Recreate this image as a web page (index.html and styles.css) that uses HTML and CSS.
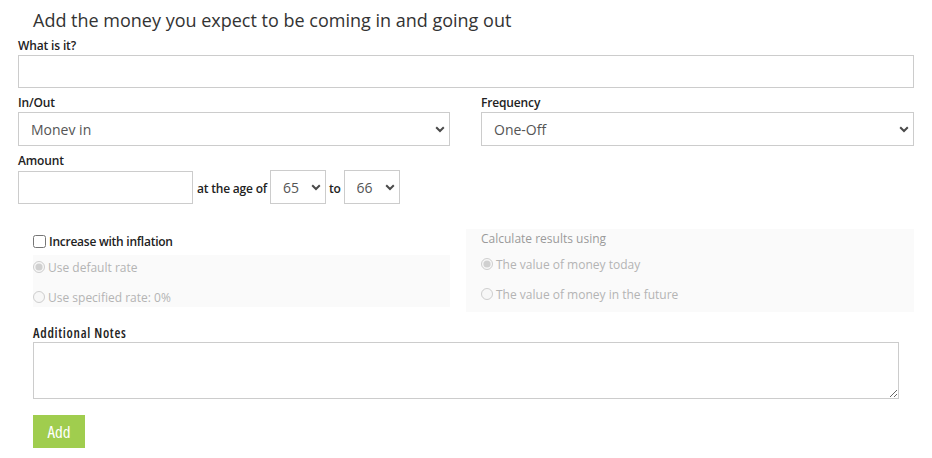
FILE: index.html
```html
<!DOCTYPE html>
<html>
<head>
<meta charset="utf-8">
<link rel="stylesheet" href="styles.css">
</head>
<body>
<div class="page">
  <h1 class="title">Add the money you expect to be coming in and going out</h1>
  <label class="lbl">What is it?</label>
  <input class="field" type="text">
  <div class="two">
    <div class="col">
      <label class="lbl">In/Out</label>
      <div class="selwrap">
        <select class="sel"><option>Monev in</option></select>
        <svg class="chev" width="10" height="7" viewBox="0 0 10 7"><path d="M1.2 1.3 L5 5 L8.8 1.3" fill="none" stroke="#4a4a4a" stroke-width="2"/></svg>
      </div>
    </div>
    <div class="col">
      <label class="lbl">Frequency</label>
      <div class="selwrap">
        <select class="sel"><option>One-Off</option></select>
        <svg class="chev" width="10" height="7" viewBox="0 0 10 7"><path d="M1.2 1.3 L5 5 L8.8 1.3" fill="none" stroke="#4a4a4a" stroke-width="2"/></svg>
      </div>
    </div>
  </div>
  <label class="lbl">Amount</label>
  <div class="amount">
    <input class="field amt" type="text">
    <span class="inl">at the age of</span>
    <div class="selwrap small">
      <select class="sel"><option>65</option></select>
      <svg class="chev" width="10" height="7" viewBox="0 0 10 7"><path d="M1.2 1.3 L5 5 L8.8 1.3" fill="none" stroke="#4a4a4a" stroke-width="2"/></svg>
    </div>
    <span class="inl">to</span>
    <div class="selwrap small">
      <select class="sel"><option>66</option></select>
      <svg class="chev" width="10" height="7" viewBox="0 0 10 7"><path d="M1.2 1.3 L5 5 L8.8 1.3" fill="none" stroke="#4a4a4a" stroke-width="2"/></svg>
    </div>
  </div>
  <div class="lower">
    <div class="infl">
      <label class="check"><input type="checkbox"> Increase with inflation</label>
      <div class="panel left">
        <label class="radio"><input type="radio" name="r1" checked disabled>Use default rate</label>
        <label class="radio"><input type="radio" name="r1" disabled>Use specified rate: 0%</label>
      </div>
    </div>
    <div class="panel right">
      <div class="ptitle">Calculate results using</div>
      <label class="radio"><input type="radio" name="r2" checked disabled>The value of money today</label>
      <label class="radio"><input type="radio" name="r2" disabled>The value of money in the future</label>
    </div>
  </div>
  <div class="notes">
    <label class="lbl cond">Additional Notes</label>
    <textarea class="ta"></textarea>
    <button class="btn">Add</button>
  </div>
</div>
</body>
</html>
```
FILE: styles.css
```css
html, body { margin: 0; padding: 0; background: #fff; }
body { font-family: "Open Sans", "Liberation Sans", sans-serif; color: #333; }
.page { padding: 7px 18px 0 18px; width: 896px; }
.title { margin: 0 0 4px 15px; font-size: 18px; line-height: 26px; font-weight: 400; color: #333; }
.lbl { display: block; font-size: 12px; line-height: 17px; font-weight: 600; color: #222; margin-bottom: 1px; letter-spacing: -0.15px; }
.field { display: block; box-sizing: border-box; width: 100%; height: 33px; border: 1px solid #ccc; border-radius: 0; padding: 0 12px; font-family: inherit; font-size: 14px; margin: 0 0 6px 0; background: #fff; }
.two { display: grid; grid-template-columns: 432px 433px; column-gap: 31px; }
.selwrap { position: relative; margin-bottom: 6px; }
.sel { display: block; box-sizing: border-box; width: 100%; height: 34px; border: 1px solid #ccc; border-radius: 0; padding: 1px 20px 0 12px; font-family: inherit; font-size: 14px; color: #555; background: #fff; -webkit-appearance: none; appearance: none; margin: 0; }
.chev { position: absolute; right: 5px; top: 14px; pointer-events: none; }
.amount { display: flex; align-items: center; gap: 3px; }
.amount .field { margin: 0 1px 0 0; }
.amt { width: 175px; }
.inl { font-size: 12px; font-weight: 600; color: #222; padding-top: 3px; letter-spacing: -0.2px; }
.selwrap.small { width: 56px; margin: 0; }
.selwrap.small .sel { padding: 1px 0 0 12px; }
.lower { display: flex; gap: 16px; margin: 25px 0 0 15px; align-items: flex-start; }
.infl { width: 417px; padding-top: 4px; }
.check { display: flex; align-items: center; font-size: 12px; font-weight: 600; color: #222; height: 17px; margin-bottom: 5px; letter-spacing: -0.25px; }
.check input { margin: 0 3px 0 0; width: 13px; height: 13px; }
.panel { background: #fafafa; }
.panel.left { height: 52px; display: flex; flex-direction: column; }
.panel.right { width: 418px; height: 83px; padding: 0 15px; }
.ptitle { font-size: 12px; color: #9a9a9a; line-height: 17px; padding-top: 1px; height: 19px; }
.radio { display: flex; align-items: center; font-size: 12px; color: #b4b4b4; height: 30px; }
.radio input { margin: 0 3px 0 0; width: 12px; height: 12px; }
.panel.left .radio { height: 24px; flex: none; margin-bottom: 6px; }
.notes { margin: 13px 0 0 15px; }
.cond { font-size: 13.5px; font-stretch: condensed; letter-spacing: 0.7px; margin-bottom: 0; font-weight: 600; }
.ta { display: block; box-sizing: border-box; width: 866px; height: 57px; border: 1px solid #ccc; border-radius: 0; resize: both; margin: 0; }
.btn { display: block; margin-top: 16px; width: 52px; height: 33px; border: 0; background: #a0cd4e; color: #fff; font-family: inherit; font-size: 17px; font-weight: 500; font-stretch: condensed; padding: 0; }
```
